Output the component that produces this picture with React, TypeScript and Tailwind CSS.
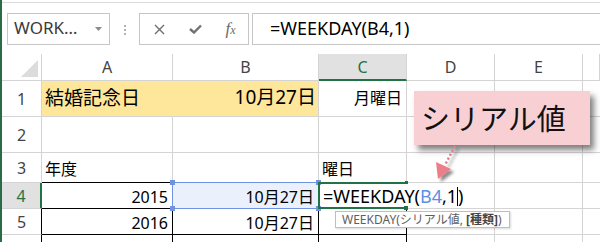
import React from "react";

const GRID = "border-[#d4d4d4]";

function RowHeader({ label, active = false }: { label: string; active?: boolean }) {
  return (
    <div
      className={`w-[40px] flex items-center justify-center border-b border-[#d4d4d4] text-[16px] ${
        active
          ? "bg-[#e1e1e1] text-[#217346] border-r-2 border-r-[#217346]"
          : "bg-white text-[#444] border-r border-r-[#d4d4d4]"
      }`}
    >
      {label}
    </div>
  );
}

function ColHeader({ label, w, active = false }: { label: string; w: string; active?: boolean }) {
  return (
    <div
      className={`${w} flex items-center justify-center border-r border-r-[#d4d4d4] text-[16px] ${
        active
          ? "bg-[#e1e1e1] text-[#217346] border-b-2 border-b-[#217346]"
          : "text-[#444] border-b border-b-[#d4d4d4]"
      }`}
    >
      {label}
    </div>
  );
}

export default function App() {
  return (
    <div className="relative w-[600px] h-[242px] overflow-hidden bg-white border-l-2 border-[#2b6b48] font-['Noto_Sans','Noto_Sans_CJK_JP',sans-serif] text-black">
      {/* formula bar */}
      <div className="mt-[2px] border-t border-[#d9d9d9] pt-[10px] flex">
        <div className="ml-[5px] w-[103px] h-[32px] border border-[#c6c6c6] flex items-center justify-between pl-[6px] pr-[7px]">
          <span className="text-[17px] text-[#3a3a3a] leading-none -mt-[3px]">WORK…</span>
          <svg width="7" height="4" viewBox="0 0 7 4">
            <polygon points="0,0 7,0 3.5,4" fill="#8c8c8c" />
          </svg>
        </div>
        <div className="w-[29px] h-[32px] flex flex-col items-center justify-center gap-[2px] pt-[2px]">
          <span className="w-[2px] h-[2px] bg-[#b3b3b3]" />
          <span className="w-[2px] h-[2px] bg-[#b3b3b3]" />
          <span className="w-[2px] h-[2px] bg-[#b3b3b3]" />
        </div>
        <div className="w-[110px] h-[32px] border border-[#c6c6c6] flex items-center">
          <div className="w-[38px] flex justify-center">
            <svg width="11" height="11" viewBox="0 0 11 11">
              <path d="M1 1 L10 10 M10 1 L1 10" stroke="#6f6f6f" strokeWidth="1.4" />
            </svg>
          </div>
          <div className="w-[35px] flex justify-center">
            <svg width="13" height="10" viewBox="0 0 13 10">
              <path d="M1 5 L5 8.5 L12 1.5" stroke="#717171" strokeWidth="2.4" fill="none" />
            </svg>
          </div>
          <div className="w-[35px] flex justify-center">
            <span className="font-['Liberation_Serif',serif] italic text-[17px] text-[#6a6a6a] leading-none -mt-[2px]">
              f<span className="text-[12px]">x</span>
            </span>
          </div>
        </div>
        <div className="ml-[3px] flex-1 h-[32px] border border-r-0 border-[#c6c6c6] flex items-center pl-[17px]">
          <span className="text-[18px] leading-none -mt-[3px] whitespace-nowrap">=WEEKDAY(B4,1)</span>
        </div>
      </div>

      {/* grid */}
      <div className="mt-[9px] flex flex-col">
        {/* column headers */}
        <div className="flex h-[27px]">
          <div className={`w-[40px] border-r border-b ${GRID} flex items-end justify-end pr-[3px] pb-[3px]`}>
            <svg width="17" height="17" viewBox="0 0 17 17">
              <polygon points="0,17 17,0 17,17" fill="#dcdcdc" />
            </svg>
          </div>
          <ColHeader label="A" w="w-[131px]" />
          <ColHeader label="B" w="w-[146px]" />
          <ColHeader label="C" w="w-[88px]" active />
          <ColHeader label="D" w="w-[88px]" />
          <ColHeader label="E" w="w-[88px]" />
          <ColHeader label="" w="w-[17px]" />
        </div>

        {/* row 1 */}
        <div className="flex h-[36px]">
          <RowHeader label="1" />
          <div className="w-[131px] bg-[#fee69b] border-r border-r-[#fee69b] border-b border-b-[#d4d4d4] flex items-center pl-[3px] pb-[3px]">
            <span className="text-[19px] font-['Noto_Sans_CJK_JP',sans-serif]">結婚記念日</span>
          </div>
          <div className="w-[146px] bg-[#fee69b] border-r border-b border-[#d4d4d4] flex items-center justify-end pr-[2px] pb-[3px]">
            <span className="text-[19px]">10月27日</span>
          </div>
          <div className={`w-[88px] border-r border-b ${GRID} flex items-center justify-end pr-[4px] pb-[2px]`}>
            <span className="text-[16px]">月曜日</span>
          </div>
          <div className={`w-[88px] border-r border-b ${GRID}`} />
          <div className={`w-[88px] border-r border-b ${GRID}`} />
          <div className={`w-[17px] border-b ${GRID}`} />
        </div>

        {/* row 2 */}
        <div className="flex h-[36px]">
          <RowHeader label="2" />
          <div className={`w-[131px] border-r border-b ${GRID}`} />
          <div className={`w-[146px] border-r border-b ${GRID}`} />
          <div className={`w-[88px] border-r border-b ${GRID}`} />
          <div className={`w-[88px] border-r border-b ${GRID}`} />
          <div className={`w-[88px] border-r border-b ${GRID}`} />
          <div className={`w-[17px] border-b ${GRID}`} />
        </div>

        {/* row 3 */}
        <div className="flex h-[30px]">
          <RowHeader label="3" />
          <div className="w-[131px] border-r border-r-[#d4d4d4] border-b border-b-black flex items-end pl-[3px] pb-[1px]">
            <span className="text-[16px]">年度</span>
          </div>
          <div className="w-[146px] border-r border-r-[#d4d4d4] border-b border-b-black" />
          <div className="w-[88px] border-r border-r-[#d4d4d4] border-b border-b-black flex items-end pl-[3px] pb-[1px]">
            <span className="text-[16px]">曜日</span>
          </div>
          <div className={`w-[88px] border-r border-b ${GRID}`} />
          <div className={`w-[88px] border-r border-b ${GRID}`} />
          <div className={`w-[17px] border-b ${GRID}`} />
        </div>

        {/* row 4 */}
        <div className="flex h-[26px]">
          <RowHeader label="4" active />
          <div className="w-[131px] border-r border-b border-black flex items-end justify-end pr-[4px]">
            <span className="text-[16px] leading-[22px]">2015</span>
          </div>
          <div className="relative w-[146px] border-r border-b border-black bg-[#eaf1fd] flex items-end justify-end pr-[4px]">
            <span className="text-[16px] leading-[22px]">10月27日</span>
            <div className="absolute -left-[1px] -top-[1px] w-[147px] h-[27px] border-[1.5px] border-[#6f93e2]" />
            <span className="absolute -left-[3px] -top-[3px] w-[5px] h-[5px] bg-[#6f93e2]" />
            <span className="absolute -right-[3px] -top-[3px] w-[5px] h-[5px] bg-[#6f93e2]" />
            <span className="absolute -left-[3px] -bottom-[3px] w-[5px] h-[5px] bg-[#6f93e2]" />
            <span className="absolute -right-[3px] -bottom-[3px] w-[5px] h-[5px] bg-[#6f93e2]" />
          </div>
          <div className="relative z-10 w-[88px] border-r border-r-transparent border-b border-b-black flex items-end pl-[4px]">
            <span className="text-[18px] leading-[23px] whitespace-nowrap bg-white">
              =WEEKDAY(<span className="text-[#5b8ee6]">B4</span>,1
              <span className="inline-block w-[1px] h-[19px] bg-black align-[-3px]" />)
            </span>
            <div className="absolute -left-[1px] -top-[1px] w-[90px] h-[27px] border-2 border-r-0 border-[#217346]" />
            <span className="absolute right-[-2px] -top-[2px] w-[3px] h-[3px] bg-[#217346]" />
            <span className="absolute right-[-2px] -bottom-[2px] w-[4px] h-[4px] bg-[#217346]" />
          </div>
          <div className={`w-[88px] border-r border-b ${GRID}`} />
          <div className={`w-[88px] border-r border-b ${GRID}`} />
          <div className={`w-[17px] border-b ${GRID}`} />
        </div>

        {/* row 5 */}
        <div className="flex h-[26px]">
          <div className="w-[40px] flex items-center justify-center border-r border-r-black border-b border-b-[#d4d4d4] text-[16px] text-[#444]">
            5
          </div>
          <div className="w-[131px] border-r border-b border-black flex items-end justify-end pr-[4px]">
            <span className="text-[16px] leading-[22px]">2016</span>
          </div>
          <div className="w-[146px] border-r border-b border-black flex items-end justify-end pr-[4px]">
            <span className="text-[16px] leading-[22px]">10月27日</span>
          </div>
          <div className="w-[88px] border-r border-b border-black" />
          <div className={`w-[88px] border-r border-b ${GRID}`} />
          <div className={`w-[88px] border-r border-b ${GRID}`} />
          <div className={`w-[17px] border-b ${GRID}`} />
        </div>

        {/* row 6 */}
        <div className="flex h-[26px]">
          <div className="w-[40px] flex items-center justify-center border-r border-r-black border-b border-b-[#d4d4d4] text-[16px] text-[#444]">
            6
          </div>
          <div className="w-[131px] border-r border-b border-black flex items-end justify-end pr-[4px]">
            <span className="text-[16px] leading-[22px]">2017</span>
          </div>
          <div className="w-[146px] border-r border-b border-black flex items-end justify-end pr-[4px]">
            <span className="text-[16px] leading-[22px]">10月27日</span>
          </div>
          <div className="w-[88px] border-r border-b border-black" />
          <div className={`w-[88px] border-r border-b ${GRID}`} />
          <div className={`w-[88px] border-r border-b ${GRID}`} />
          <div className={`w-[17px] border-b ${GRID}`} />
        </div>
      </div>

      {/* function tooltip */}
      <div className="absolute z-20 left-[333px] top-[211px] w-[175px] h-[17px] bg-white border border-[#bebebe] shadow-[1px_1px_2px_rgba(0,0,0,0.15)] flex items-center pl-[6px]">
        <span className="text-[12px] leading-none text-[#5e5e5e] whitespace-nowrap">
          WEEKDAY(シリアル値, <span className="font-bold text-[#444]">[種類]</span>)
        </span>
      </div>

      {/* callout */}
      <div className="absolute z-20 left-[412px] top-[91px] w-[176px] h-[54px] bg-[#f8d0d4] shadow-[4px_5px_6px_rgba(0,0,0,0.5)] flex items-center pl-[7px]">
        <span className="text-[29px] leading-none font-['Noto_Sans_CJK_JP',sans-serif] text-[#111] -mt-[2px]">
          シリアル値
        </span>
      </div>

      {/* dotted arrow */}
      <svg className="absolute z-20 left-[428px] top-[143px]" width="36" height="42" viewBox="428 143 36 42">
        <defs>
          <filter id="sh" x="-50%" y="-50%" width="200%" height="200%">
            <feDropShadow dx="3" dy="3" stdDeviation="1.5" floodColor="#000" floodOpacity="0.45" />
          </filter>
        </defs>
        <g filter="url(#sh)">
          <line x1="453" y1="146" x2="443" y2="165" stroke="#e57e8a" strokeWidth="2.4" strokeDasharray="2.2 2.2" />
          <polygon points="434,162 449,169 436,179" fill="#ec7d89" />
        </g>
      </svg>
    </div>
  );
}
